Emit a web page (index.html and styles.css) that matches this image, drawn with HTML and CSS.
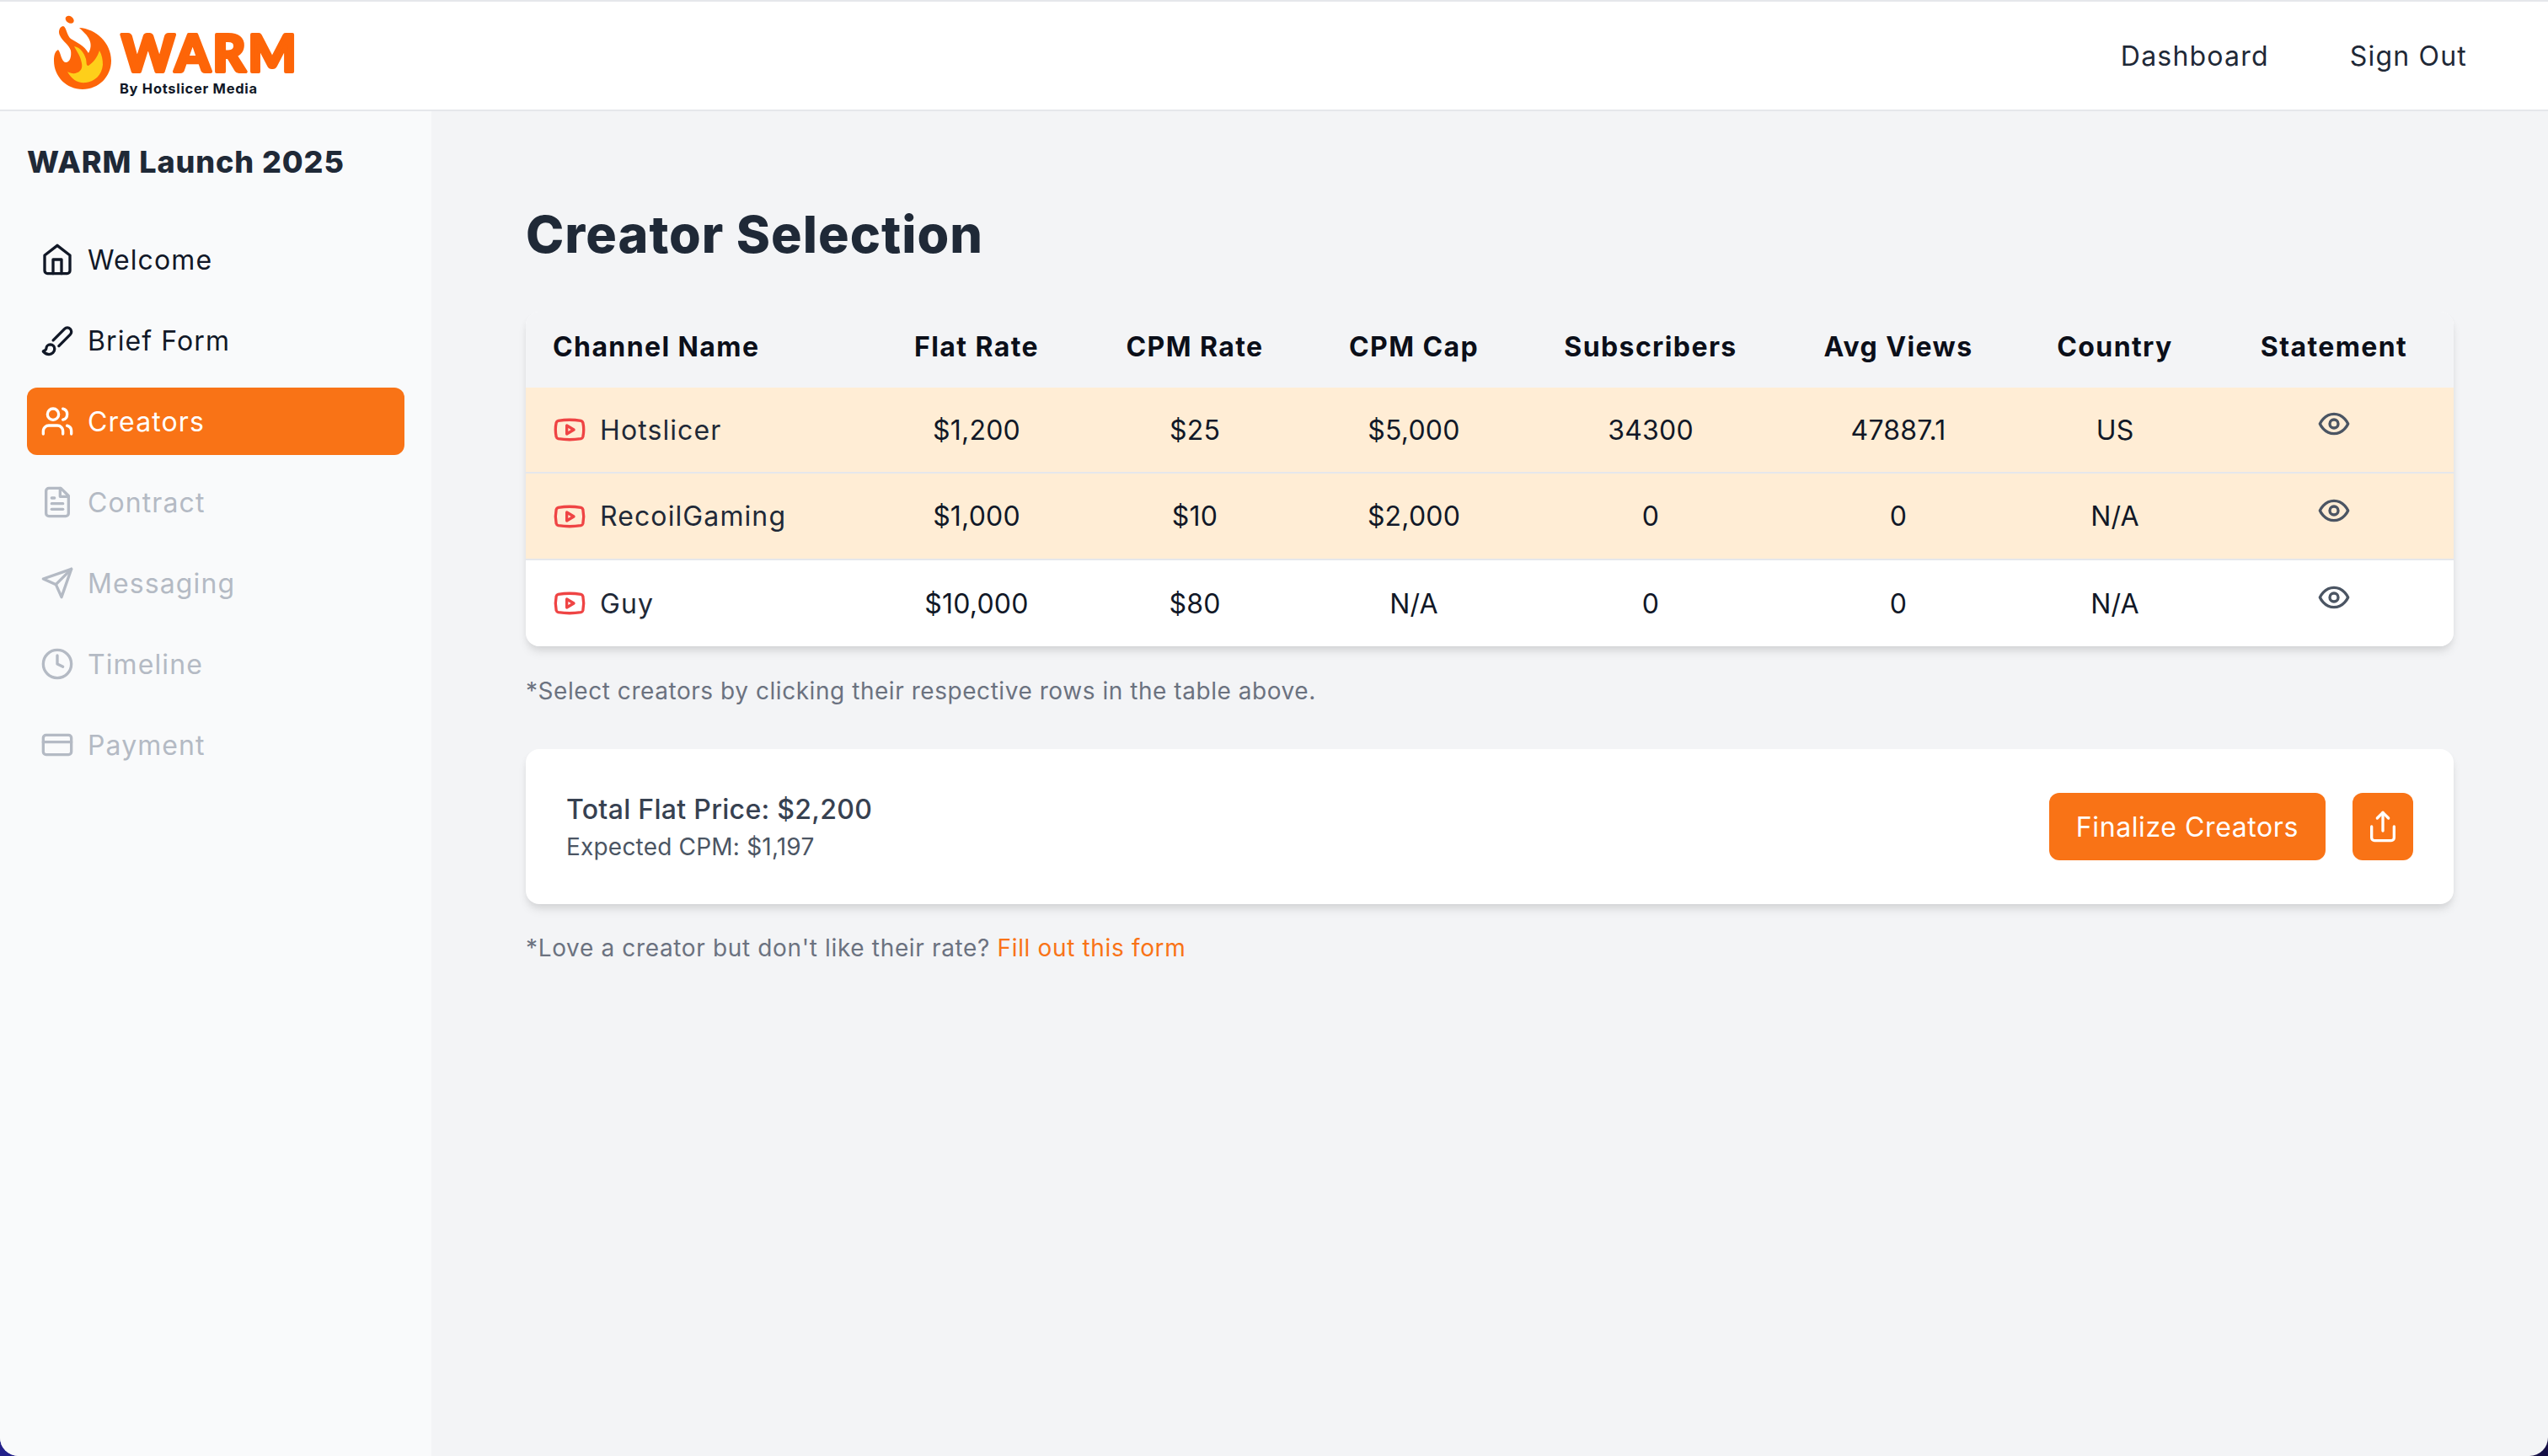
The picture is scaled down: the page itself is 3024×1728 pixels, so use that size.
FILE: index.html
```html
<!DOCTYPE html>
<html lang="en">
<head>
  <meta charset="UTF-8" />
  <title>WARM – Creator Selection</title>
  <link rel="stylesheet" href="styles.css">
</head>
<body>

  <header class="topbar">
    <a class="logo" href="#">
      <svg class="logo-flame" viewBox="0 0 68 88">
        <ellipse cx="18.7" cy="5.3" rx="5.4" ry="4" transform="rotate(35 18.7 5.3)" fill="#fd6508"/>
        <path fill="#fd6508" d="M30 15C50 16 68 33 68 54C68 73 53 88 34 88C15 88 0 73 0 54C0 48 1 43 5 41C8 44 9 56 14 56C19 56 21 49 20 42C18 35 10 31 7 24C5 20 6 14 11 13C15 14 15 24 20 28C28 33 36 36 41 45C45 38 44 32 41 27C38 22 34 19 30 15Z"/>
        <path fill="#fecf1a" d="M24 37C31 38 36 45 38 52C39 57 38 60 41 60C47 56 52 49 54 42C57 47 58 53 58 59C57 71 48 79 38 80C28 81 21 76 16 67C21 70 27 70 31 66C35 62 33 56 31 50C29 45 26 41 24 37Z"/>
      </svg>
      <span class="logo-text">
        <svg class="logo-word" viewBox="0 0 240 72"><text x="2" y="69">WARM</text></svg>
        <span class="logo-by">By Hotslicer Media</span>
      </span>
    </a>
    <nav class="topnav">
      <a href="#">Dashboard</a>
      <a href="#">Sign Out</a>
    </nav>
  </header>

  <div class="layout">
    <aside class="sidebar">
      <h2 class="sidebar-title">WARM Launch 2025</h2>
      <ul class="steps">
        <li class="step">
          <svg class="icon" viewBox="0 0 24 24"><path d="m3 9 9-7 9 7v11a2 2 0 0 1-2 2H5a2 2 0 0 1-2-2z"/><polyline points="9 22 9 12 15 12 15 22"/></svg>
          Welcome
        </li>
        <li class="step">
          <svg class="icon" viewBox="0 0 24 24"><path d="m9.06 11.9 8.07-8.06a2.85 2.85 0 1 1 4.03 4.03l-8.06 8.08"/><path d="M7.07 14.94c-1.66 0-3 1.35-3 3.02 0 1.33-2.5 1.52-2 2.02 1.08 1.1 2.49 2.02 4 2.02 2.2 0 4-1.8 4-4.04a3.01 3.01 0 0 0-3-3.02z"/></svg>
          Brief Form
        </li>
        <li class="step active">
          <svg class="icon" viewBox="0 0 24 24"><path d="M16 21v-2a4 4 0 0 0-4-4H6a4 4 0 0 0-4 4v2"/><circle cx="9" cy="7" r="4"/><path d="M22 21v-2a4 4 0 0 0-3-3.87"/><path d="M16 3.13a4 4 0 0 1 0 7.75"/></svg>
          Creators
        </li>
        <li class="step locked">
          <svg class="icon" viewBox="0 0 24 24"><path d="M14.5 2H6a2 2 0 0 0-2 2v16a2 2 0 0 0 2 2h12a2 2 0 0 0 2-2V7.5L14.5 2z"/><polyline points="14 2 14 8 20 8"/><line x1="16" x2="8" y1="13" y2="13"/><line x1="16" x2="8" y1="17" y2="17"/><line x1="10" x2="8" y1="9" y2="9"/></svg>
          Contract
        </li>
        <li class="step locked">
          <svg class="icon" viewBox="0 0 24 24"><path d="m22 2-7 20-4-9-9-4Z"/><path d="M22 2 11 13"/></svg>
          Messaging
        </li>
        <li class="step locked">
          <svg class="icon" viewBox="0 0 24 24"><circle cx="12" cy="12" r="10"/><polyline points="12 6 12 12 16 14"/></svg>
          Timeline
        </li>
        <li class="step locked">
          <svg class="icon" viewBox="0 0 24 24"><rect width="20" height="14" x="2" y="5" rx="2"/><line x1="2" x2="22" y1="10" y2="10"/></svg>
          Payment
        </li>
      </ul>
    </aside>

    <main class="content">
      <h1 class="page-title">Creator Selection</h1>

      <div class="table-card">
        <table class="creators">
          <colgroup>
            <col class="col-name"><col class="col-flat"><col class="col-cpm"><col class="col-cap">
            <col class="col-subs"><col class="col-views"><col class="col-country"><col class="col-statement">
          </colgroup>
          <thead>
            <tr>
              <th class="name-cell">Channel Name</th>
              <th>Flat Rate</th>
              <th>CPM Rate</th>
              <th>CPM Cap</th>
              <th>Subscribers</th>
              <th>Avg Views</th>
              <th>Country</th>
              <th>Statement</th>
            </tr>
          </thead>
          <tbody>
            <tr class="selected">
              <td class="name-cell"><span class="channel"><svg class="yt" viewBox="0 0 24 24"><path d="M2.5 17a24.12 24.12 0 0 1 0-10 2 2 0 0 1 1.4-1.4 49.56 49.56 0 0 1 16.2 0A2 2 0 0 1 21.5 7a24.12 24.12 0 0 1 0 10 2 2 0 0 1-1.4 1.4 49.55 49.55 0 0 1-16.2 0A2 2 0 0 1 2.5 17"/><path d="m10 15 5-3-5-3z"/></svg>Hotslicer</span></td>
              <td>$1,200</td>
              <td>$25</td>
              <td>$5,000</td>
              <td>34300</td>
              <td>47887.1</td>
              <td>US</td>
              <td class="eye-cell"><svg class="eye" viewBox="0 0 24 24"><path d="M2 12s3-7 10-7 10 7 10 7-3 7-10 7-10-7-10-7Z"/><circle cx="12" cy="12" r="3"/></svg></td>
            </tr>
            <tr class="selected">
              <td class="name-cell"><span class="channel"><svg class="yt" viewBox="0 0 24 24"><path d="M2.5 17a24.12 24.12 0 0 1 0-10 2 2 0 0 1 1.4-1.4 49.56 49.56 0 0 1 16.2 0A2 2 0 0 1 21.5 7a24.12 24.12 0 0 1 0 10 2 2 0 0 1-1.4 1.4 49.55 49.55 0 0 1-16.2 0A2 2 0 0 1 2.5 17"/><path d="m10 15 5-3-5-3z"/></svg>RecoilGaming</span></td>
              <td>$1,000</td>
              <td>$10</td>
              <td>$2,000</td>
              <td>0</td>
              <td>0</td>
              <td>N/A</td>
              <td class="eye-cell"><svg class="eye" viewBox="0 0 24 24"><path d="M2 12s3-7 10-7 10 7 10 7-3 7-10 7-10-7-10-7Z"/><circle cx="12" cy="12" r="3"/></svg></td>
            </tr>
            <tr>
              <td class="name-cell"><span class="channel"><svg class="yt" viewBox="0 0 24 24"><path d="M2.5 17a24.12 24.12 0 0 1 0-10 2 2 0 0 1 1.4-1.4 49.56 49.56 0 0 1 16.2 0A2 2 0 0 1 21.5 7a24.12 24.12 0 0 1 0 10 2 2 0 0 1-1.4 1.4 49.55 49.55 0 0 1-16.2 0A2 2 0 0 1 2.5 17"/><path d="m10 15 5-3-5-3z"/></svg>Guy</span></td>
              <td>$10,000</td>
              <td>$80</td>
              <td>N/A</td>
              <td>0</td>
              <td>0</td>
              <td>N/A</td>
              <td class="eye-cell"><svg class="eye" viewBox="0 0 24 24"><path d="M2 12s3-7 10-7 10 7 10 7-3 7-10 7-10-7-10-7Z"/><circle cx="12" cy="12" r="3"/></svg></td>
            </tr>
          </tbody>
        </table>
      </div>

      <p class="hint">*Select creators by clicking their respective rows in the table above.</p>

      <div class="summary">
        <div class="totals">
          <div class="total-flat">Total Flat Price: $2,200</div>
          <div class="total-cpm">Expected CPM: $1,197</div>
        </div>
        <div class="actions">
          <button class="btn">Finalize Creators</button>
          <button class="btn btn-icon"><svg class="icon" viewBox="0 0 24 24"><path d="M4 12v8a2 2 0 0 0 2 2h12a2 2 0 0 0 2-2v-8"/><polyline points="16 6 12 2 8 6"/><line x1="12" x2="12" y1="2" y2="15"/></svg></button>
        </div>
      </div>

      <p class="hint hint-form">*Love a creator but don't like their rate? <a href="#">Fill out this form</a></p>
    </main>
  </div>

</body>
</html>
```

FILE: styles.css
```css
* {
  box-sizing: border-box;
}

/* the dark bit only shows in the rounded bottom corners */
html {
  background: linear-gradient(to right, #23218a, #150f45);
}

body {
  margin: 0;
  height: 100vh;
  display: flex;
  flex-direction: column;
  overflow: hidden;
  border-radius: 0 0 22px 22px;
  font-family: Inter, "Liberation Sans", sans-serif;
  font-size: 32px;
  letter-spacing: 0.6px;
  color: #1f2937;
  background: #f3f4f6;
}

a {
  color: inherit;
  text-decoration: none;
}

/* top bar */
.topbar {
  height: 132px;
  flex-shrink: 0;
  display: flex;
  align-items: center;
  justify-content: space-between;
  padding: 0 96px 0 64px;
  background: white;
  border-top: 2px solid #e5e7eb;
  border-bottom: 2px solid #e5e7eb;
}

.logo {
  display: flex;
  align-items: flex-start;
  gap: 10px;
  height: 96px;
}

.logo-flame {
  width: 68px;
  height: 88px;
}

.logo-text {
  display: flex;
  flex-direction: column;
  padding-top: 18px;
}

.logo-word {
  display: block;
  width: 240px;
  height: 72px;
  margin-top: -20px;
}

.logo-word text {
  font-family: Lato, sans-serif;
  font-weight: 900;
  font-size: 60px;
  letter-spacing: 3px;
  fill: #fd6508;
  stroke: #fd6508;
  stroke-width: 4;
  stroke-linejoin: round;
}

.logo-by {
  margin-top: 7px;
  font-weight: 700;
  font-size: 16.5px;
  line-height: 20px;
  letter-spacing: 0.7px;
  color: #111827;
}

.topnav {
  display: flex;
  gap: 96px;
  letter-spacing: 1.2px;
}

/* sidebar */
.layout {
  flex: 1;
  display: flex;
}

.sidebar {
  width: 512px;
  flex-shrink: 0;
  padding: 32px;
  background: #f9fafb;
}

.sidebar-title {
  margin: 0 0 48px;
  font-size: 36px;
  line-height: 56px;
  font-weight: 800;
  letter-spacing: 0.9px;
}

.steps {
  list-style: none;
  margin: 0;
  padding: 0;
  display: flex;
  flex-direction: column;
  gap: 16px;
}

.step {
  height: 80px;
  display: flex;
  align-items: center;
  gap: 16px;
  padding: 0 16px;
  border-radius: 12px;
  letter-spacing: 1.1px;
  color: #111827;
}

.step.active {
  background: #f97316;
  color: white;
}

.step.locked {
  color: #b4bac4;
}

.icon {
  width: 40px;
  height: 40px;
  flex-shrink: 0;
  fill: none;
  stroke: currentColor;
  stroke-width: 2;
  stroke-linecap: round;
  stroke-linejoin: round;
}

/* main */
.content {
  flex: 1;
  padding: 106px 112px 64px;
}

.page-title {
  margin: 0 0 52px;
  font-size: 61px;
  line-height: 80px;
  font-weight: 800;
  letter-spacing: 1px;
}

.table-card {
  border-radius: 16px;
  overflow: hidden;
  box-shadow: 0 8px 12px -2px rgba(0,0,0,0.1), 0 4px 8px -2px rgba(0,0,0,0.06);
}

.creators {
  width: 100%;
  border-collapse: collapse;
  table-layout: fixed;
  background: white;
  color: #111827;
}

.col-name { width: 410px; }
.col-flat { width: 250px; }
.col-cpm { width: 268px; }
.col-cap { width: 252px; }
.col-subs { width: 310px; }
.col-views { width: 278px; }
.col-country { width: 236px; }
.col-statement { width: 284px; }

.creators th {
  height: 90px;
  padding: 0 0 8px;
  background: #f3f4f6;
  font-weight: 700;
  text-align: center;
  letter-spacing: 1.4px;
  color: #0b0f19;
}

.creators td {
  height: 103px;
  padding: 0;
  text-align: center;
  letter-spacing: 0.2px;
  border-top: 2px solid #e5e7eb;
}

.creators tbody tr:first-child td {
  border-top: 0;
  height: 101px;
}

.creators .name-cell {
  text-align: left;
  padding-left: 32px;
}

.selected {
  background: #ffedd5;
}

.channel {
  display: flex;
  align-items: center;
  gap: 16px;
  letter-spacing: 1.1px;
  color: #1f2937;
}

.yt {
  width: 40px;
  height: 40px;
  flex-shrink: 0;
  fill: none;
  stroke: #ef4444;
  stroke-width: 2;
  stroke-linecap: round;
  stroke-linejoin: round;
}

.creators .eye-cell {
  line-height: 0;
  padding-bottom: 14px;
}

.eye {
  width: 40px;
  height: 40px;
  fill: none;
  stroke: #4b5563;
  stroke-width: 2;
  stroke-linecap: round;
  stroke-linejoin: round;
}

.hint {
  margin: 33px 0 0;
  font-size: 28px;
  line-height: 40px;
  color: #6b7280;
  letter-spacing: 0.55px;
}

.hint a {
  color: #f97316;
}

.summary {
  margin-top: 49px;
  height: 184px;
  display: flex;
  align-items: center;
  justify-content: space-between;
  padding: 0 48px;
  background: white;
  border-radius: 16px;
  box-shadow: 0 8px 12px -2px rgba(0,0,0,0.1), 0 4px 8px -2px rgba(0,0,0,0.06);
}

.total-flat {
  font-size: 32px;
  line-height: 48px;
  font-weight: 500;
  letter-spacing: 0.3px;
  color: #374151;
}

.total-cpm {
  font-size: 28px;
  line-height: 40px;
  letter-spacing: 0.2px;
  color: #4b5563;
}

.actions {
  display: flex;
  gap: 32px;
}

.btn {
  height: 80px;
  padding: 0 32px;
  border: none;
  border-radius: 12px;
  font: inherit;
  letter-spacing: inherit;
  color: white;
  background: #f97316;
  cursor: pointer;
}

.btn-icon {
  width: 72px;
  padding: 0;
  display: flex;
  align-items: center;
  justify-content: center;
}

.hint-form {
  margin-top: 32px;
  letter-spacing: 0.65px;
}
```
